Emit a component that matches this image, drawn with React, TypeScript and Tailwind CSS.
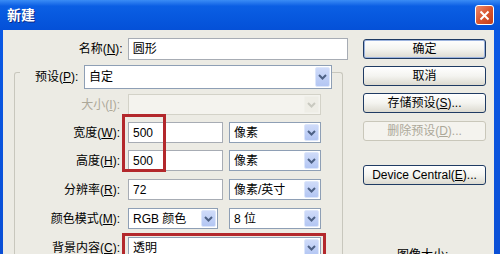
import type { ReactNode } from "react"

const font = "font-['Liberation_Sans','Noto_Sans_CJK_SC',sans-serif]"

function Chevron({ disabled }: { disabled?: boolean }) {
  return (
    <svg width="9" height="6" viewBox="0 0 9 6">
      <path
        d="M1 1 L4.5 4.5 L8 1"
        fill="none"
        stroke={disabled ? "#c9c9c0" : "#4d6185"}
        strokeWidth="2"
      />
    </svg>
  )
}

function Select({
  value,
  className,
  disabled,
  tall,
}: {
  value?: string
  className: string
  disabled?: boolean
  tall?: boolean
}) {
  return (
    <div
      className={`flex items-center justify-between border ${tall ? "h-[24px]" : "h-[21px]"} ${
        disabled ? "border-[#d3d2c8] bg-[#f4f3ee]" : "border-[#8e9fb5] bg-white"
      } ${className}`}
    >
      <span className="pl-[4px] text-[12px] leading-none">{value}</span>
      <div
        className={`mr-[1px] flex h-[calc(100%-2px)] w-[15px] items-center justify-center rounded-[2px] border ${
          disabled
            ? "border-[#f0f0ea] bg-[#eeede6]"
            : "border-[#dce6fb] bg-gradient-to-b from-[#cfdbf9] to-[#b3c6f3]"
        }`}
      >
        <Chevron disabled={disabled} />
      </div>
    </div>
  )
}

function Input({ value, className }: { value: string; className: string }) {
  return (
    <div className={`flex h-[21px] items-center border border-[#a7acb4] bg-white pl-[4px] text-[12px] ${className}`}>
      {value}
    </div>
  )
}

function Label({ children, disabled }: { children: ReactNode; disabled?: boolean }) {
  return (
    <span
      className={`w-[108px] shrink-0 pr-[3px] text-right text-[12px] ${
        disabled ? "text-[#aca899]" : "text-black"
      }`}
    >
      {children}
    </span>
  )
}

function Row({ children, className = "" }: { children: ReactNode; className?: string }) {
  return <div className={`flex items-center gap-[5px] ${className}`}>{children}</div>
}

function Button({
  children,
  primary,
  disabled,
  className = "",
}: {
  children: ReactNode
  primary?: boolean
  disabled?: boolean
  className?: string
}) {
  return (
    <div
      className={`flex h-[20px] w-[123px] items-center justify-center rounded-[3px] border text-[12px] ${
        disabled
          ? "border-[#c9c7ba] bg-[#f4f3ee] text-[#aca899]"
          : "border-[#1f3b63] bg-gradient-to-b from-white via-[#f4f4f0] to-[#dcdad0] text-black"
      } ${primary ? "shadow-[inset_0_0_0_1px_#9cb3de]" : ""} ${className}`}
    >
      {children}
    </div>
  )
}

export default function App() {
  return (
    <div
      className={`relative flex h-[254px] w-[500px] flex-col overflow-hidden bg-gradient-to-b from-[#0a5ae6] to-[#0a4fd6] ${font}`}
    >
      {/* title bar */}
      <div className="flex h-[30px] shrink-0 items-center justify-between bg-gradient-to-b from-[#3a8cf5] via-[#0b5fe4] via-20% to-[#0450d8] pl-[7px]">
        <span className="text-[14px] font-bold text-white [text-shadow:1px_1px_#0c2a8a]">新建</span>
        <div className="mr-[6px] flex h-[20px] w-[19px] items-center justify-center rounded-[3px] border border-white bg-gradient-to-br from-[#ec8a6c] via-[#d9552f] to-[#c33d17]">
          <svg width="11" height="11" viewBox="0 0 11 11">
            <path d="M1.5 1.5 L9.5 9.5 M9.5 1.5 L1.5 9.5" stroke="white" strokeWidth="2" />
          </svg>
        </div>
      </div>

      {/* body */}
      <div className="ml-[3px] mr-[6px] flex flex-1 bg-[#ecebe4]">
        {/* left */}
        <div className="ml-[11px] flex w-[334px] flex-col pt-[8px]">
          <Row className="gap-[4px]">
            <span className="w-[109px] pr-[0px] text-right text-[12px]">
              名称(<u>N</u>):
            </span>
            <Input value="圆形" className="h-[22px] w-[221px]" />
          </Row>

          <div className="mt-[12px] w-[329px] flex-1 rounded-t-[3px] border border-b-0 border-[#c8c7bd]">
            <div className="-mt-[8px] flex items-center">
              <span className="ml-[5px] w-[64px] bg-[#ecebe4] pl-[15px] text-[12px]">
                预设(<u>P</u>):
              </span>
              <Select value="自定" className="w-[248px]" tall />
            </div>

            <div className="mt-[5px] flex flex-col">
              <Row>
                <Label disabled>
                  大小(<u>I</u>):
                </Label>
                <Select disabled className="h-[20px] w-[193px]" />
              </Row>
              <Row className="mt-[7px]">
                <Label>
                  宽度(<u>W</u>):
                </Label>
                <Input value="500" className="w-[95px]" />
                <Select value="像素" className="ml-[1px] w-[92px]" />
              </Row>
              <Row className="mt-[7px]">
                <Label>
                  高度(<u>H</u>):
                </Label>
                <Input value="500" className="w-[95px]" />
                <Select value="像素" className="ml-[1px] w-[92px]" />
              </Row>
              <Row className="mt-[8px]">
                <Label>
                  分辨率(<u>R</u>):
                </Label>
                <Input value="72" className="w-[95px]" />
                <Select value="像素/英寸" className="ml-[1px] w-[92px]" />
              </Row>
              <Row className="mt-[8px]">
                <Label>
                  颜色模式(<u>M</u>):
                </Label>
                <Select value="RGB 颜色" className="w-[90px]" />
                <Select value="8 位" className="ml-[6px] w-[92px]" />
              </Row>
              <Row className="mt-[8px]">
                <Label>
                  背景内容(<u>C</u>):
                </Label>
                <Select value="透明" className="w-[193px]" />
              </Row>
            </div>
          </div>
        </div>

        {/* right buttons */}
        <div className="ml-[15px] flex flex-col pt-[9px]">
          <Button primary>确定</Button>
          <Button className="mt-[7px]">取消</Button>
          <Button className="mt-[7px]">
            存储预设(<u>S</u>)...
          </Button>
          <Button disabled className="mt-[8px]">
            删除预设(<u>D</u>)...
          </Button>
          <Button className="mt-[24px]">
            Device Central(<u>E</u>)...
          </Button>
          <span className="ml-[34px] mt-[61px] text-[12px]">图像大小:</span>
        </div>
      </div>

      {/* red highlight annotations */}
      <div className="absolute left-[122px] top-[114px] h-[58px] w-[44px] border-[3px] border-[#b3282c]" />
      <div className="absolute left-[122px] top-[233px] h-[30px] w-[204px] border-[3px] border-[#b3282c]" />
    </div>
  )
}
